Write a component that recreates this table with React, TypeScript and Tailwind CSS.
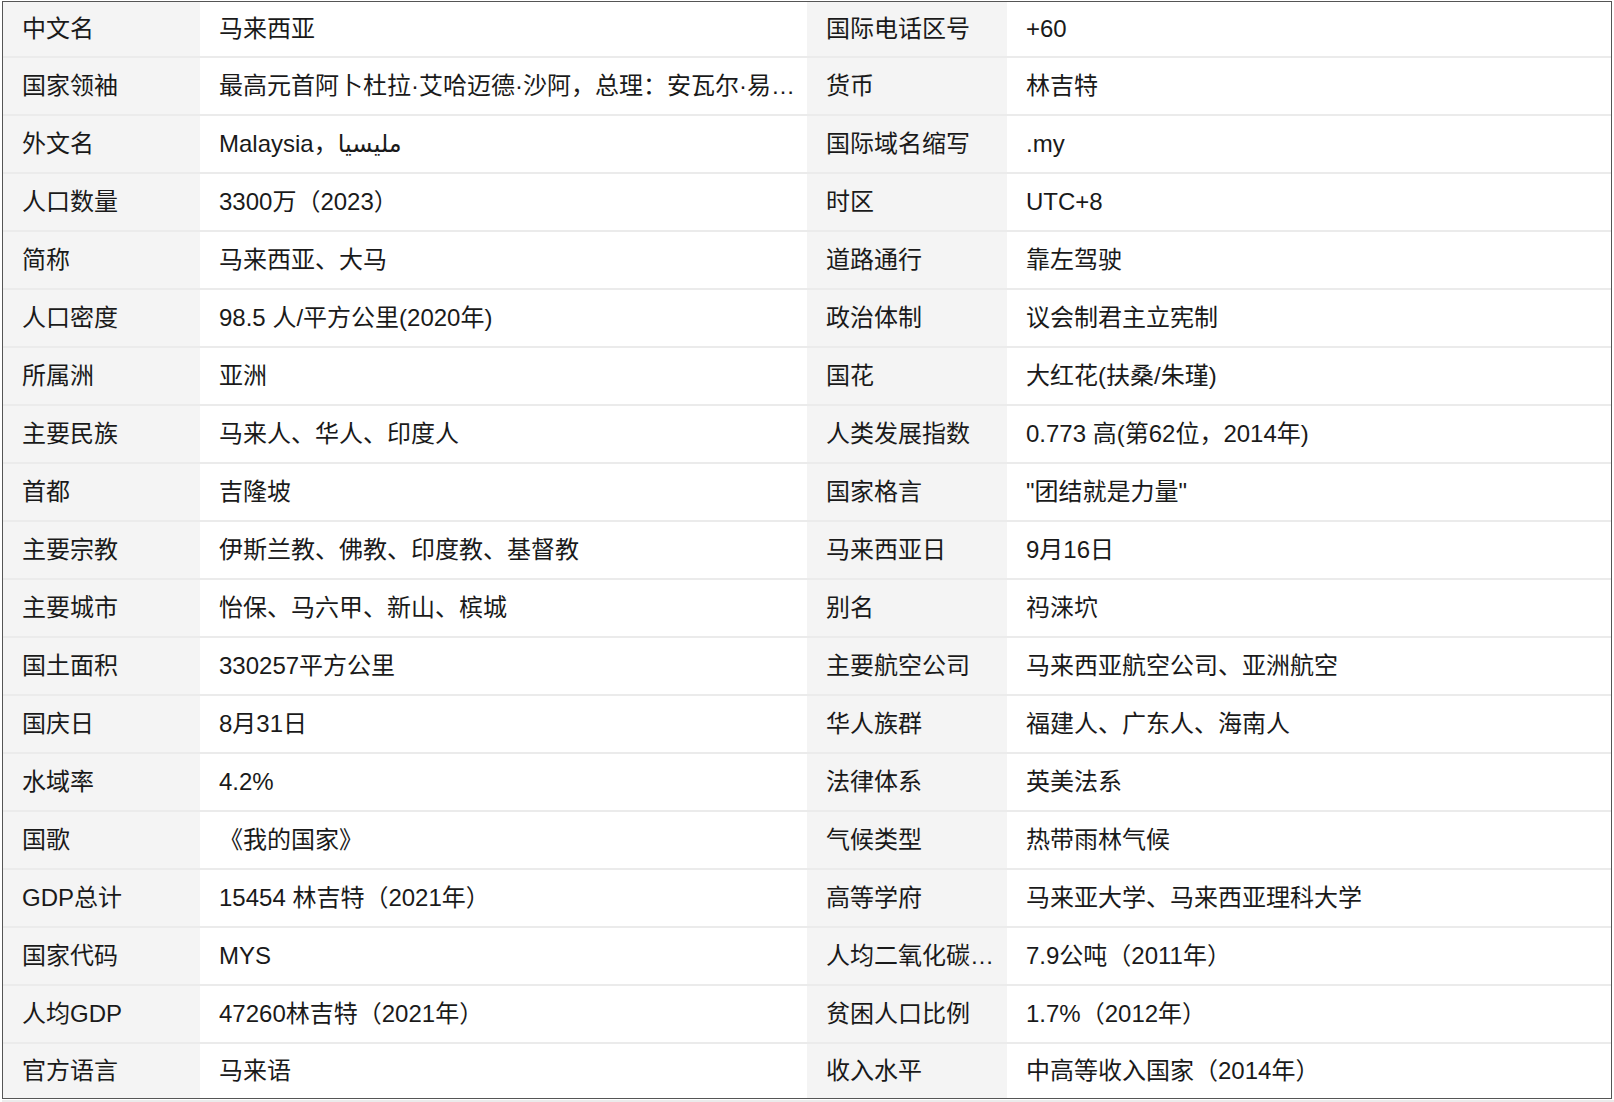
const rows: [string, string, string, string][] = [
  ['中文名', '马来西亚', '国际电话区号', '+60'],
  ['国家领袖', '最高元首阿卜杜拉·艾哈迈德·沙阿，总理：安瓦尔·易卜拉欣', '货币', '林吉特'],
  ['外文名', 'Malaysia，مليسيا', '国际域名缩写', '.my'],
  ['人口数量', '3300万（2023）', '时区', 'UTC+8'],
  ['简称', '马来西亚、大马', '道路通行', '靠左驾驶'],
  ['人口密度', '98.5 人/平方公里(2020年)', '政治体制', '议会制君主立宪制'],
  ['所属洲', '亚洲', '国花', '大红花(扶桑/朱瑾)'],
  ['主要民族', '马来人、华人、印度人', '人类发展指数', '0.773 高(第62位，2014年)'],
  ['首都', '吉隆坡', '国家格言', '"团结就是力量"'],
  ['主要宗教', '伊斯兰教、佛教、印度教、基督教', '马来西亚日', '9月16日'],
  ['主要城市', '怡保、马六甲、新山、槟城', '别名', '祃涞坹'],
  ['国土面积', '330257平方公里', '主要航空公司', '马来西亚航空公司、亚洲航空'],
  ['国庆日', '8月31日', '华人族群', '福建人、广东人、海南人'],
  ['水域率', '4.2%', '法律体系', '英美法系'],
  ['国歌', '《我的国家》', '气候类型', '热带雨林气候'],
  ['GDP总计', '15454 林吉特（2021年）', '高等学府', '马来亚大学、马来西亚理科大学'],
  ['国家代码', 'MYS', '人均二氧化碳排放量', '7.9公吨（2011年）'],
  ['人均GDP', '47260林吉特（2021年）', '贫困人口比例', '1.7%（2012年）'],
  ['官方语言', '马来语', '收入水平', '中高等收入国家（2014年）'],
];

function Row({ cells, first, last }: { cells: [string, string, string, string]; first: boolean; last: boolean }) {
  // border-box: separator is counted inside the row height
  const h = first ? 'h-[54px]' : last ? 'h-[56px]' : 'h-[58px]';
  return (
    <div
      className={`grid grid-cols-[197px_607px_200px_1fr] ${h} ${first ? '' : 'border-t-2 border-[#ebebeb]'}`}
    >
      {cells.map((c, i) => (
        <div
          key={i}
          className={`flex items-center min-w-0 pl-[19px] pr-3 ${i % 2 === 0 ? 'bg-[#f4f4f4]' : 'bg-white'}`}
        >
          <span className="truncate">{c}</span>
        </div>
      ))}
    </div>
  );
}

export default function App() {
  return (
    <div
      className="w-[1614px] h-[1102px] bg-white pt-[1px] pl-[2px] text-[#1a1a1a] text-[24px] overflow-hidden"
      style={{ fontFamily: '"Liberation Sans", "Noto Sans CJK SC", "DejaVu Sans", sans-serif' }}
    >
      <div className="w-[1610px] border border-[#555555]">
        {rows.map((r, i) => (
          <Row key={r[0]} cells={r} first={i === 0} last={i === rows.length - 1} />
        ))}
      </div>
      <div className="mt-[1px] h-[2px] bg-[#ebebeb]" />
    </div>
  );
}
